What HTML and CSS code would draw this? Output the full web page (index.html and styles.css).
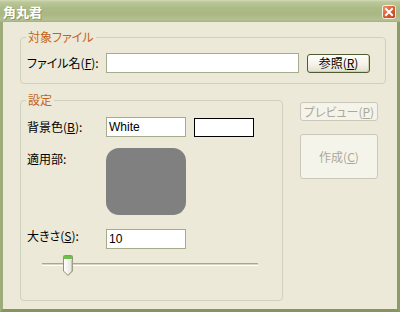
FILE: index.html
```html
<!DOCTYPE html>
<html lang="ja">
<head>
<meta charset="utf-8">
<title>角丸君</title>
<link rel="stylesheet" href="styles.css">
</head>
<body>
<div class="window">
  <div class="titlebar">
    <span class="title">角丸君</span>
    <span class="close">
      <svg width="14" height="14" viewBox="0 0 14 14">
        <defs>
          <linearGradient id="cg" x1="0" y1="0" x2="1" y2="1">
            <stop offset="0" stop-color="#f09a76"/>
            <stop offset="0.5" stop-color="#dc5a33"/>
            <stop offset="1" stop-color="#c2401c"/>
          </linearGradient>
        </defs>
        <rect x="0.5" y="0.5" width="13" height="13" rx="2" fill="url(#cg)" stroke="#f4f1e4"/>
        <path d="M4 4 L10 10 M10 4 L4 10" stroke="#fff" stroke-width="2" stroke-linecap="square"/>
      </svg>
    </span>
  </div>
  <div class="client">
    <fieldset class="group g1">
      <legend>対象ファイル</legend>
      <div class="gbody">
        <div class="row">
          <span class="lbl">ファイル名(<u>F</u>):</span>
          <div class="input wide"></div>
          <button class="btn ref">参照(<u>R</u>)</button>
        </div>
      </div>
    </fieldset>
    <div class="lower">
      <fieldset class="group g2">
        <legend>設定</legend>
        <div class="gbody">
          <div class="row">
            <span class="lbl">背景色(<u>B</u>):</span>
            <div class="input short">White</div>
            <div class="swatch"></div>
          </div>
          <div class="row top r2">
            <span class="lbl pad">適用部:</span>
            <div class="preview"></div>
          </div>
          <div class="row top r3">
            <span class="lbl pad1">大きさ(<u>S</u>):</span>
            <div class="input short">10</div>
          </div>
          <div class="slider">
            <div class="track"></div>
            <svg class="thumb" width="12" height="22" viewBox="0 0 12 22">
              <defs>
                <linearGradient id="tg" x1="0" y1="0" x2="1" y2="0">
                  <stop offset="0" stop-color="#ffffff"/>
                  <stop offset="1" stop-color="#e4e3d8"/>
                </linearGradient>
              </defs>
              <path d="M1.5 1.5 Q1.5 0.5 2.5 0.5 H9.5 Q10.5 0.5 10.5 1.5 V16 L6 20.5 L1.5 16 Z" fill="url(#tg)" stroke="#8c957a"/>
              <rect x="2" y="1" width="8" height="3" fill="#6fbf4a"/>
              <path d="M10 5 V16 L6 20" stroke="#a6ab98" fill="none"/>
            </svg>
          </div>
        </div>
      </fieldset>
      <div class="side">
        <button class="btn dis prev">プレビュー(<u>P</u>)</button>
        <button class="btn dis make">作成(<u>C</u>)</button>
      </div>
    </div>
  </div>
</div>
</body>
</html>
```

FILE: styles.css
```css
html, body {
  margin: 0;
  padding: 0;
  background: #ece9d8;
}

.window {
  width: 400px;
  height: 312px;
  display: flex;
  flex-direction: column;
  background: #ece9d8;
  font-family: "Noto Sans CJK JP", sans-serif;
  font-size: 12px;
  line-height: 14px;
  font-feature-settings: "palt";
  color: #000;
}

.titlebar {
  flex: none;
  height: 22px;
  box-sizing: border-box;
  display: flex;
  align-items: center;
  justify-content: space-between;
  padding: 0 4px 0 3px;
  background: linear-gradient(#d3dab6 0px, #bcc79a 2px, #adbb88 8px, #a9b783 14px, #b4c193 20px, #a3b17c 22px);
}

.title {
  color: #fff;
  font-weight: bold;
  font-size: 13px;
  line-height: 15px;
  text-shadow: 1px 1px 0 #8d9a6a;
  letter-spacing: 0;
}

.close {
  display: flex;
  margin-top: 1px;
}

.client {
  flex: 1;
  box-sizing: border-box;
  border-left: 3px solid #9dac7a;
  border-right: 3px solid #8c9b68;
  border-bottom: 3px solid #86955f;
  padding: 8px 0 0 17px;
}

.group {
  margin: 0;
  padding: 0;
  min-width: 0;
  box-sizing: border-box;
  border: 1px solid #d0d0bf;
  border-radius: 4px;
}

.group legend {
  padding: 0 2px;
  margin-left: 5px;
  color: #c4631c;
  line-height: 14px;
}

.g1 {
  width: 366px;
  height: 54px;
}

.gbody {
  padding: 9px 0 0 6px;
}

.g2 .gbody {
  padding-top: 10px;
}

.row {
  display: flex;
  align-items: center;
}

.row.top {
  align-items: flex-start;
}

.lbl {
  width: 79px;
  flex: none;
  white-space: nowrap;
}

.lbl.pad {
  padding-top: 4px;
}

.lbl.pad1 {
  padding-top: 0;
}

.input {
  height: 20px;
  box-sizing: border-box;
  border: 1px solid #a5ac8e;
  background: #fff;
  font-family: "Liberation Sans", sans-serif;
  font-size: 12px;
  line-height: 18px;
  padding-left: 2px;
}

.input.wide {
  width: 193px;
}

.input.short {
  width: 80px;
}

.btn {
  margin: 0;
  padding: 0;
  box-sizing: border-box;
  font-family: "Noto Sans CJK JP", sans-serif;
  font-size: 12px;
  line-height: 14px;
  font-feature-settings: "palt";
  color: #000;
  border: 1px solid #4f5c33;
  border-radius: 3px;
  background: linear-gradient(#fefefa, #f4f3ea 55%, #e3e0cc);
  box-shadow: inset -1px -1px 0 #d4cfb3;
}

.btn.ref {
  width: 63px;
  height: 19px;
  margin-left: 8px;
}

.btn.dis {
  color: #aca899;
  border-color: #cac8bb;
  background: #f5f4ea;
  box-shadow: none;
}

.lower {
  display: flex;
  margin-top: 9px;
}

.g2 {
  width: 263px;
  height: 208px;
}

.swatch {
  width: 60px;
  height: 19px;
  box-sizing: border-box;
  margin-left: 8px;
  border: 1px solid #000;
  background: #fff;
}

.r2 {
  margin-top: 11px;
}

.preview {
  width: 80px;
  height: 67px;
  background: #808080;
  border-radius: 13px;
}

.r3 {
  margin-top: 14px;
}

.slider {
  position: relative;
  margin: 6px 0 0 15px;
  width: 216px;
  height: 22px;
}

.track {
  position: relative;
  top: 8px;
  height: 1px;
  background: #d8d5c4;
  border-top: 1px solid #a9a691;
  border-bottom: 1px solid #fff;
}

.thumb {
  position: absolute;
  left: 20px;
  top: 0;
}

.side {
  display: flex;
  flex-direction: column;
  gap: 13px;
  margin: 9px 0 0 17px;
}

.btn.prev {
  width: 78px;
  height: 19px;
}

.btn.make {
  width: 78px;
  height: 45px;
}
```
